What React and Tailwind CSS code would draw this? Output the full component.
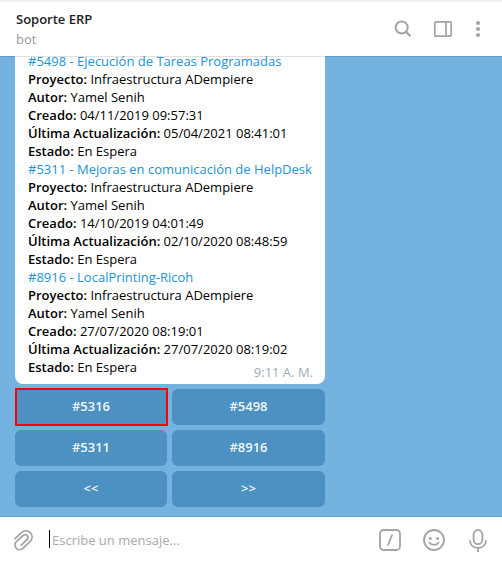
const tickets = [
  { id: '#5498', title: 'Ejecución de Tareas Programadas', created: '04/11/2019 09:57:31', updated: '05/04/2021 08:41:01' },
  { id: '#5311', title: 'Mejoras en comunicación de HelpDesk', created: '14/10/2019 04:01:49', updated: '02/10/2020 08:48:59' },
  { id: '#8916', title: 'LocalPrinting-Ricoh', created: '27/07/2020 08:19:01', updated: '27/07/2020 08:19:02' },
];

const buttons = ['#5316', '#5498', '#5311', '#8916', '<<', '>>'];

function Field({ label, children }) {
  return (
    <p>
      <b className="font-semibold">{label}:</b> {children}
    </p>
  );
}

function Ticket({ ticket }) {
  return (
    <div>
      <p className="text-[#2492d4]">{ticket.id} - {ticket.title}</p>
      <Field label="Proyecto">Infraestructura ADempiere</Field>
      <Field label="Autor">Yamel Senih</Field>
      <Field label="Creado">{ticket.created}</Field>
      <Field label="Última Actualización">{ticket.updated}</Field>
      <Field label="Estado">En Espera</Field>
    </div>
  );
}

function Header() {
  return (
    <header className="relative z-10 flex h-14 shrink-0 items-start border-t-2 border-[#efefef] bg-white pr-3 pl-4 shadow-[0_1px_0_rgba(0,0,0,0.12)]">
      <div className="grow pt-[7px] leading-5">
        <h1 className="font-semibold text-[#222]">Soporte ERP</h1>
        <p className="text-[#999]">bot</p>
      </div>
      <div className="flex pt-[15px] text-[#a4a4a4]">
        <svg className="mr-4 size-6" viewBox="0 0 24 24" fill="none" stroke="currentColor" strokeWidth="2">
          <circle cx="10.7" cy="10.5" r="6" />
          <path d="M15 14.8l4.4 4.4" strokeWidth="2.3" />
        </svg>
        <svg className="mr-[11px] size-6" viewBox="0 0 24 24" fill="none" stroke="currentColor" strokeWidth="1.7">
          <rect x="3.8" y="4.8" width="16.4" height="14.4" rx="1" />
          <path d="M15 5v14" />
        </svg>
        <svg className="size-6" viewBox="0 0 24 24" fill="currentColor">
          <circle cx="12" cy="6" r="2.1" />
          <circle cx="12" cy="12" r="2.1" />
          <circle cx="12" cy="18" r="2.1" />
        </svg>
      </div>
    </header>
  );
}

function Composer() {
  return (
    <footer className="flex h-[47px] shrink-0 items-center border-t border-[#639fcf] bg-white pr-3 pl-[11px] text-[#a4a4a4]">
      <svg className="size-6" viewBox="0 0 24 24" fill="none" stroke="currentColor" strokeWidth="1.8" strokeLinecap="round" strokeLinejoin="round">
        <path d="M4 10.7l6.8-6.3c2.4-2.2 5.9-2.1 8.4.3 2.4 2.4 2.5 6 .3 8.4l-7.3 7.1c-1.9 1.9-4.9 2-6.8.2-1.9-1.9-1.9-4.8 0-6.7l6.7-6.2c1.2-1.2 2.9-1.1 4 0 1.2 1.2 1.2 2.8 0 4l-5.9 5.7" />
      </svg>
      <div className="mb-0.5 ml-3.5 h-[18px] w-px bg-black" />
      <p className="grow pl-0.5 text-[#aaa]">Escribe un mensaje...</p>
      <div className="flex gap-5">
        <svg className="size-6" viewBox="0 0 24 24" fill="none" stroke="currentColor" strokeWidth="1.8">
          <rect x="2" y="2" width="20" height="20" rx="3.5" />
          <path d="M14.3 6.5l-4.5 11" />
        </svg>
        <svg className="size-6" viewBox="0 0 24 24" fill="none" stroke="currentColor" strokeWidth="1.8">
          <circle cx="12" cy="12" r="10" />
          <path d="M7.3 14.6c2 3 7.4 3 9.4 0" strokeLinecap="round" />
          <circle cx="8.4" cy="10.4" r="1.5" fill="currentColor" stroke="none" />
          <circle cx="15.6" cy="10.4" r="1.5" fill="currentColor" stroke="none" />
        </svg>
        <svg className="size-6" viewBox="0 0 24 24" fill="none" stroke="currentColor" strokeWidth="1.8">
          <rect x="7.6" y="2" width="8.8" height="14.2" rx="4.4" />
          <path d="M4 12.2c0 5 3.6 7.7 8 7.7s8-2.7 8-7.7M12 20v4" />
        </svg>
      </div>
    </footer>
  );
}

export default function App() {
  return (
    <div className="flex h-[563px] w-[502px] flex-col overflow-hidden bg-white font-['Open_Sans',sans-serif] text-[13px] leading-[18px] text-black">
      <Header />
      <main className="flex min-h-0 grow flex-col justify-end bg-[#74b2e0] pb-[9px] pl-[15px]">
        <div className="relative w-[310px] rounded-b-lg bg-white px-[13px] pb-2">
          {tickets.map((ticket) => (
            <Ticket key={ticket.id} ticket={ticket} />
          ))}
          <span className="absolute right-3 bottom-[3px] text-[#a0acb6]">9:11 A. M.</span>
        </div>
        <div className="mt-[5px] grid w-[310px] grid-cols-[152px_153px] gap-[5px] text-center font-semibold text-white/95">
          {buttons.map((label, index) => (
            <div key={label} className="relative flex h-9 items-center justify-center rounded-md bg-[#4c91c1] pb-0.5">
              {label}
              {index === 0 && <span className="absolute -inset-y-px -right-px left-0 border-2 border-[#f00]" />}
            </div>
          ))}
        </div>
      </main>
      <Composer />
    </div>
  );
}
